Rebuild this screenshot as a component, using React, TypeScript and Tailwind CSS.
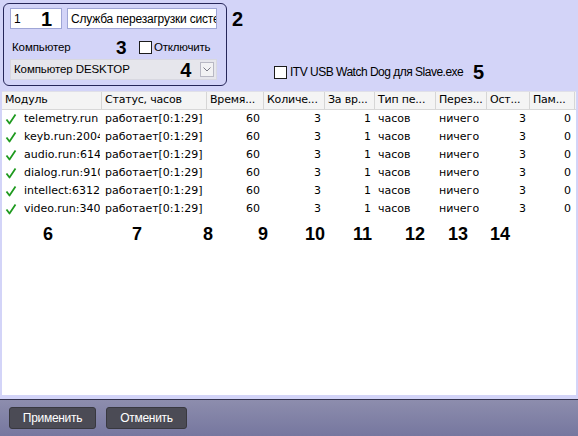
import React from "react";

const COLS = [
  { title: "Модуль", w: 100, align: "left" },
  { title: "Статус, часов", w: 105, align: "left" },
  { title: "Время...", w: 57, align: "right" },
  { title: "Количе...", w: 61, align: "right" },
  { title: "За вр...", w: 50, align: "right" },
  { title: "Тип пе...", w: 61, align: "left" },
  { title: "Перез...", w: 51, align: "left" },
  { title: "Ост...", w: 43, align: "right" },
  { title: "Пам...", w: 45, align: "right" },
];

const MODULES = [
  "telemetry.run",
  "keyb.run:2004",
  "audio.run:6148",
  "dialog.run:9100",
  "intellect:6312",
  "video.run:3404",
];

// annotation numbers under the columns
const MARKS = [
  { n: "6", w: 89 },
  { n: "7", w: 71 },
  { n: "8", w: 55 },
  { n: "9", w: 47 },
  { n: "10", w: 48 },
  { n: "11", w: 52 },
  { n: "12", w: 43 },
  { n: "13", w: 42 },
  { n: "14", w: 30 },
];

const tahoma = { fontFamily: "'DejaVu Sans', Verdana, sans-serif" };

function Check() {
  return (
    <svg width="12" height="12" viewBox="0 0 12 12" className="shrink-0">
      <path d="M1.5 6.5 L4.5 10.5 L10.5 1.5" fill="none" stroke="#1f9a1f" strokeWidth="1.8" strokeLinejoin="round" />
    </svg>
  );
}

function Box() {
  return <span className="inline-block w-[13px] h-[13px] border border-[#1c1c1c] bg-white shrink-0" />;
}

export default function App() {
  const rowData = (m: string) => [m, "работает[0:1:29]", "60", "3", "1", "часов", "ничего", "3", "0"];

  return (
    <div
      className="w-[578px] h-[436px] bg-[#d3d4f8] flex flex-col overflow-hidden text-black"
      style={{ fontFamily: "'Liberation Sans', Arial, sans-serif" }}
    >
      {/* Top settings */}
      <div className="h-[91px] flex shrink-0">
        <div className="ml-[3px] mt-[3px] w-[224px] h-[83px] rounded-[6px] border border-[#262659] px-[6px] pt-[4px] flex flex-col">
          <div className="flex items-center gap-[5px]">
            <div className="w-[52px] h-[21px] border border-[#9fa6d6] bg-white flex items-center justify-between pl-[3px] pr-[9px]">
              <span className="text-[12px]">1</span>
              <span className="text-[20px] font-bold leading-none">1</span>
            </div>
            <div className="w-[150px] h-[21px] border border-[#9fa6d6] bg-white flex items-center pl-[3px] text-[12px] tracking-[-0.2px] whitespace-nowrap overflow-hidden">
              Служба перезагрузки систе
            </div>
          </div>
          <div className="flex items-center mt-[11px] h-[15px]">
            <span className="text-[11.5px] tracking-[-0.1px] ml-[2px] w-[104px]">Компьютер</span>
            <span className="text-[19px] font-bold leading-none w-[23px]">3</span>
            <Box />
            <span className="text-[11.5px] tracking-[-0.2px] ml-[2px]">Отключить</span>
          </div>
          <div className="mt-[4px] w-[207px] h-[21px] bg-[#e6e6ec] border border-[#d8d8e0] flex items-center pl-[3px] pr-[2px]">
            <span className="text-[11.5px] tracking-[-0.1px] w-[168px]">Компьютер DESKTOP</span>
            <span className="text-[20px] font-bold leading-none w-[20px]">4</span>
            <span className="w-[14px] h-[15px] border border-[#b8b8c4] bg-[#f2f2f4] flex items-center justify-center">
              <svg width="8" height="5" viewBox="0 0 8 5"><path d="M0.5 0.5 L4 4 L7.5 0.5" fill="none" stroke="#7a7a86" strokeWidth="1" /></svg>
            </span>
          </div>
        </div>
        <div className="flex flex-col ml-[5px]">
          <span className="text-[20px] font-bold leading-none mt-[9px]">2</span>
          <div className="flex items-center mt-[36px] ml-[42px] h-[14px]">
            <Box />
            <span className="text-[12px] tracking-[-0.5px] ml-[3px] w-[183px]">ITV USB Watch Dog для Slave.exe</span>
            <span className="text-[20px] font-bold leading-none">5</span>
          </div>
        </div>
      </div>

      {/* Module table */}
      <div className="flex-1 bg-white ml-[2px] mr-[2px] flex flex-col" style={tahoma}>
        <div className="flex h-[19px] bg-[#f4f4f4] border-t border-[#e0e0e8] border-b border-b-[#d8d8d8] text-[11px] tracking-[-0.2px]">
          {COLS.map((c) => (
            <div
              key={c.title}
              style={{ width: c.w }}
              className="shrink-0 border-r border-[#d6d6d6] px-[3px] flex items-center whitespace-nowrap overflow-hidden"
            >
              {c.title}
            </div>
          ))}
        </div>
        {MODULES.map((m) => (
          <div key={m} className="flex h-[18px] text-[11px]">
            {rowData(m).map((v, i) => (
              <div
                key={i}
                style={{ width: COLS[i].w }}
                className={`shrink-0 flex items-center whitespace-nowrap overflow-hidden ${
                  COLS[i].align === "right" ? "justify-end pr-[4px]" : "pl-[3px] pr-[2px]"
                } ${i === 0 ? "gap-[7px]" : ""}`}
              >
                {i === 0 && <Check />}
                <span className="overflow-hidden">{v}</span>
              </div>
            ))}
          </div>
        ))}
        <div className="flex mt-[7px] pl-[41px]" style={{ fontFamily: "'Liberation Sans', Arial, sans-serif" }}>
          {MARKS.map((mk) => (
            <div key={mk.n} style={{ width: mk.w }} className="shrink-0 text-[18px] font-bold leading-none">
              {mk.n}
            </div>
          ))}
        </div>
      </div>
      <div className="h-[4px] shrink-0" />

      {/* Bottom bar */}
      <div className="h-[37px] shrink-0 border-t border-[#34344e] bg-gradient-to-b from-[#8d8dad] to-[#76779f] flex items-center gap-[10px] pl-[9px] pb-[1px]">
        <button className="w-[87px] h-[22px] rounded-[3px] bg-[#4b4b55] border border-[#38383f] text-white text-[12px] tracking-[-0.3px]">
          Применить
        </button>
        <button className="w-[81px] h-[22px] rounded-[3px] bg-[#4b4b55] border border-[#38383f] text-white text-[12px] tracking-[-0.3px]">
          Отменить
        </button>
      </div>
    </div>
  );
}
